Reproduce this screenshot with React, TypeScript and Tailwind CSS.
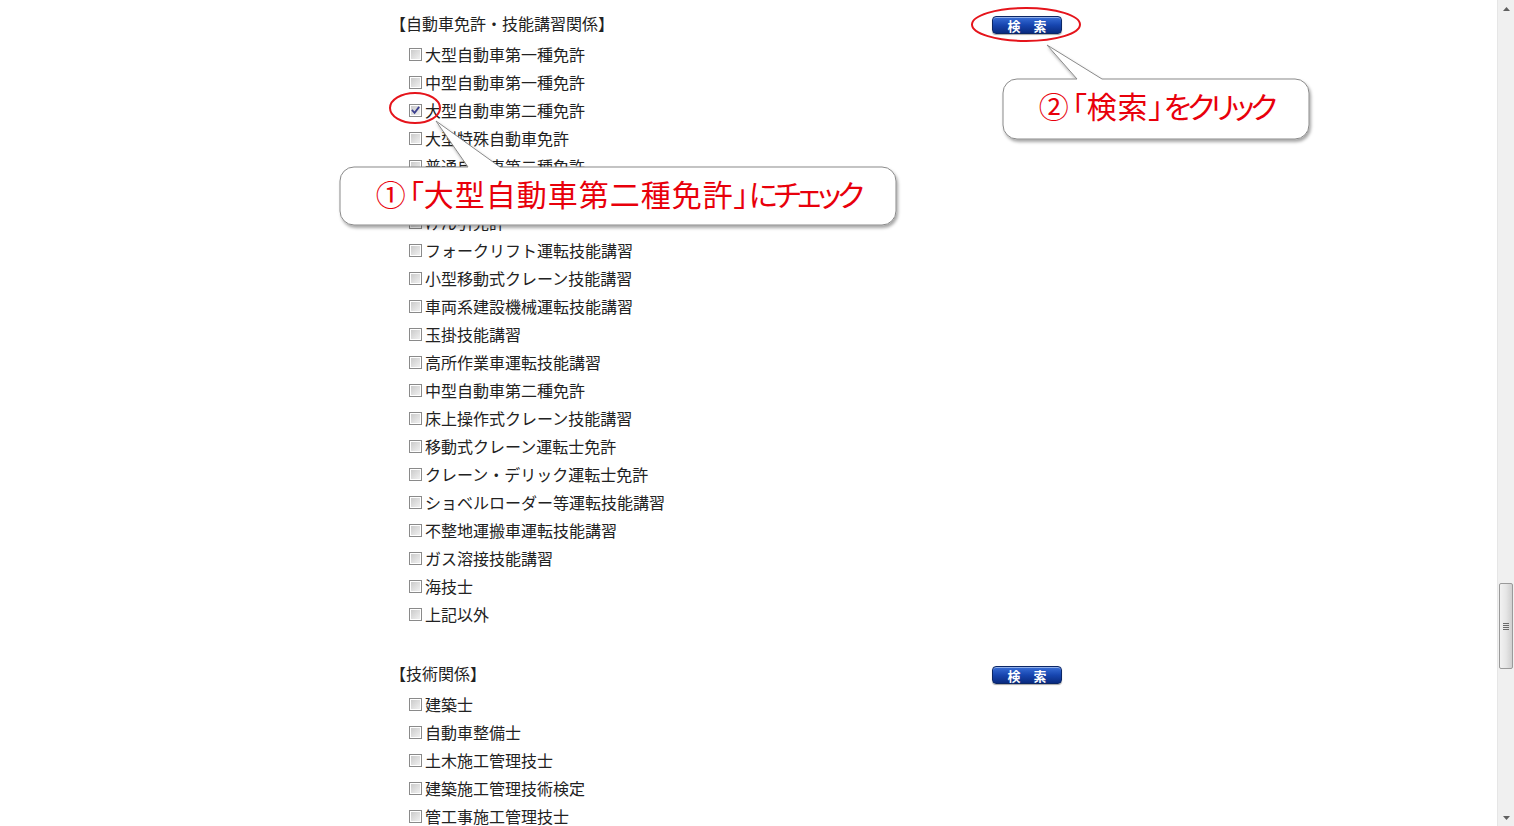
import React from "react";

const section1 = [
  "大型自動車第一種免許",
  "中型自動車第一種免許",
  "大型自動車第二種免許",
  "大型特殊自動車免許",
  "普通自動車第二種免許",
  "普通自動車第一種免許",
  "けん引免許",
  "フォークリフト運転技能講習",
  "小型移動式クレーン技能講習",
  "車両系建設機械運転技能講習",
  "玉掛技能講習",
  "高所作業車運転技能講習",
  "中型自動車第二種免許",
  "床上操作式クレーン技能講習",
  "移動式クレーン運転士免許",
  "クレーン・デリック運転士免許",
  "ショベルローダー等運転技能講習",
  "不整地運搬車運転技能講習",
  "ガス溶接技能講習",
  "海技士",
  "上記以外",
];

const section2 = [
  "建築士",
  "自動車整備士",
  "土木施工管理技士",
  "建築施工管理技術検定",
  "管工事施工管理技士",
  "電気工事施工管理技士",
  "電気主任技術者",
];

function Check({ checked }: { checked?: boolean }) {
  return (
    <span className="relative inline-block w-[13px] h-[13px] shrink-0 border border-[#8a8a8a] bg-white">
      <span className="absolute inset-[1px] bg-linear-to-br from-[#cbcbcb] to-[#f0f0f0]" />
      {checked && (
        <svg className="absolute left-0 top-0" width="11" height="11" viewBox="0 0 11 11">
          <path d="M2.5 5.5 L4.6 7.8 L8.6 2.6" fill="none" stroke="#3b3f8f" strokeWidth="1.8" strokeLinecap="square" />
        </svg>
      )}
    </span>
  );
}

function SearchButton() {
  return (
    <button className="mt-[2px] w-[70px] h-[18px] rounded-[4px] border border-[#0b2766] bg-linear-to-b from-[#3a6fd8] via-[#1746b0] to-[#0a2b80] shadow-[inset_0_1px_0_rgba(255,255,255,0.45),0_1px_1px_rgba(0,0,0,0.35)] text-white text-[13px] font-bold leading-none flex items-center justify-center font-['Noto_Sans_CJK_JP',sans-serif]">
      検　索
    </button>
  );
}

function Section({ title, items, checkedIndex, className }: { title: string; items: string[]; checkedIndex?: number; className?: string }) {
  return (
    <div className={className}>
      <div className="h-[28px] mb-[2px] flex items-center justify-between">
        <span className="text-[16px] leading-none -ml-[7px] mt-[-2px]">{title}</span>
        <SearchButton />
      </div>
      {items.map((t, i) => (
        <div key={i} className="h-[28px] flex items-center pl-[12px] gap-[3px]">
          <Check checked={i === checkedIndex} />
          <span className="text-[16px] leading-none">{t}</span>
        </div>
      ))}
    </div>
  );
}

export default function App() {
  return (
    <div className="h-[826px] w-full overflow-hidden flex bg-white text-[#222] font-['Noto_Sans_CJK_JP','Noto_Sans',sans-serif]">
      <div className="relative flex-1 overflow-hidden">
        <div className="ml-[397px] w-[665px] pt-[10px]">
          <Section title="【自動車免許・技能講習関係】" items={section1} checkedIndex={2} />
          <Section title="【技術関係】" items={section2} className="mt-[32px]" />
        </div>

        <svg className="absolute left-0 top-0 pointer-events-none" width="1497" height="826" viewBox="0 0 1497 826">
          <defs>
            <filter id="sh" x="-10%" y="-30%" width="120%" height="170%">
              <feDropShadow dx="1.5" dy="2.5" stdDeviation="1.5" floodColor="#000" floodOpacity="0.35" />
            </filter>
          </defs>
          <ellipse cx="1026" cy="24.5" rx="54" ry="16.5" fill="none" stroke="#e5141b" strokeWidth="2" />
          <ellipse cx="415" cy="108" rx="25" ry="15" fill="none" stroke="#e5141b" strokeWidth="2" />
          <path
            d="M354 167 L468 167 L436 121 L500 167 L882 167 A14 14 0 0 1 896 181 L896 211 A14 14 0 0 1 882 225 L354 225 A14 14 0 0 1 340 211 L340 181 A14 14 0 0 1 354 167 Z"
            fill="#fff"
            stroke="#8a8a8a"
            strokeWidth="1"
            filter="url(#sh)"
          />
          <path
            d="M1017 79 L1077 79 L1047 45 L1102 79 L1295 79 A14 14 0 0 1 1309 93 L1309 125 A14 14 0 0 1 1295 139 L1017 139 A14 14 0 0 1 1003 125 L1003 93 A14 14 0 0 1 1017 79 Z"
            fill="#fff"
            stroke="#8a8a8a"
            strokeWidth="1"
            filter="url(#sh)"
          />
        </svg>

        <div className="absolute left-[340px] top-[167px] w-[556px] h-[52px] flex items-center justify-center text-[30px] leading-none text-[#e8000b] [font-feature-settings:'palt'] pointer-events-none">
          <span>①</span>
          <span className="ml-[3px]">「</span>
          <span className="tracking-[1px]">大型自動車第二種免許</span>
          <span>」</span>
          <span className="tracking-[-4px]">にチェック</span>
        </div>
        <div className="absolute left-[1003px] top-[79px] w-[306px] h-[52px] flex items-center justify-center text-[30px] leading-none text-[#e8000b] [font-feature-settings:'palt'] pointer-events-none">
          <span>②</span>
          <span className="ml-[3px]">「</span>
          <span className="tracking-[1px]">検索</span>
          <span>」</span>
          <span className="tracking-[-4px]">をクリック</span>
        </div>
      </div>

      <div className="w-[17px] h-full flex flex-col bg-[#f0f0f0] border-l border-[#e6e6e6]">
        <div className="h-[17px] flex items-center justify-center">
          <svg width="7" height="4" viewBox="0 0 7 4"><path d="M0 4 L3.5 0 L7 4 Z" fill="#606060" /></svg>
        </div>
        <div className="h-[566px]" />
        <div className="mx-[1px] h-[86px] rounded-[2px] border border-[#9a9a9a] bg-linear-to-r from-[#f2f2f2] via-[#e6e6e6] to-[#cfcfcf] flex flex-col items-center justify-center gap-[1px]">
          <span className="w-[6px] h-[1px] bg-[#6a6a6a]" />
          <span className="w-[6px] h-[1px] bg-[#6a6a6a]" />
          <span className="w-[6px] h-[1px] bg-[#6a6a6a]" />
          <span className="w-[6px] h-[1px] bg-[#6a6a6a]" />
        </div>
        <div className="flex-1" />
        <div className="h-[17px] flex items-center justify-center">
          <svg width="7" height="4" viewBox="0 0 7 4"><path d="M0 0 L7 0 L3.5 4 Z" fill="#606060" /></svg>
        </div>
      </div>
    </div>
  );
}
